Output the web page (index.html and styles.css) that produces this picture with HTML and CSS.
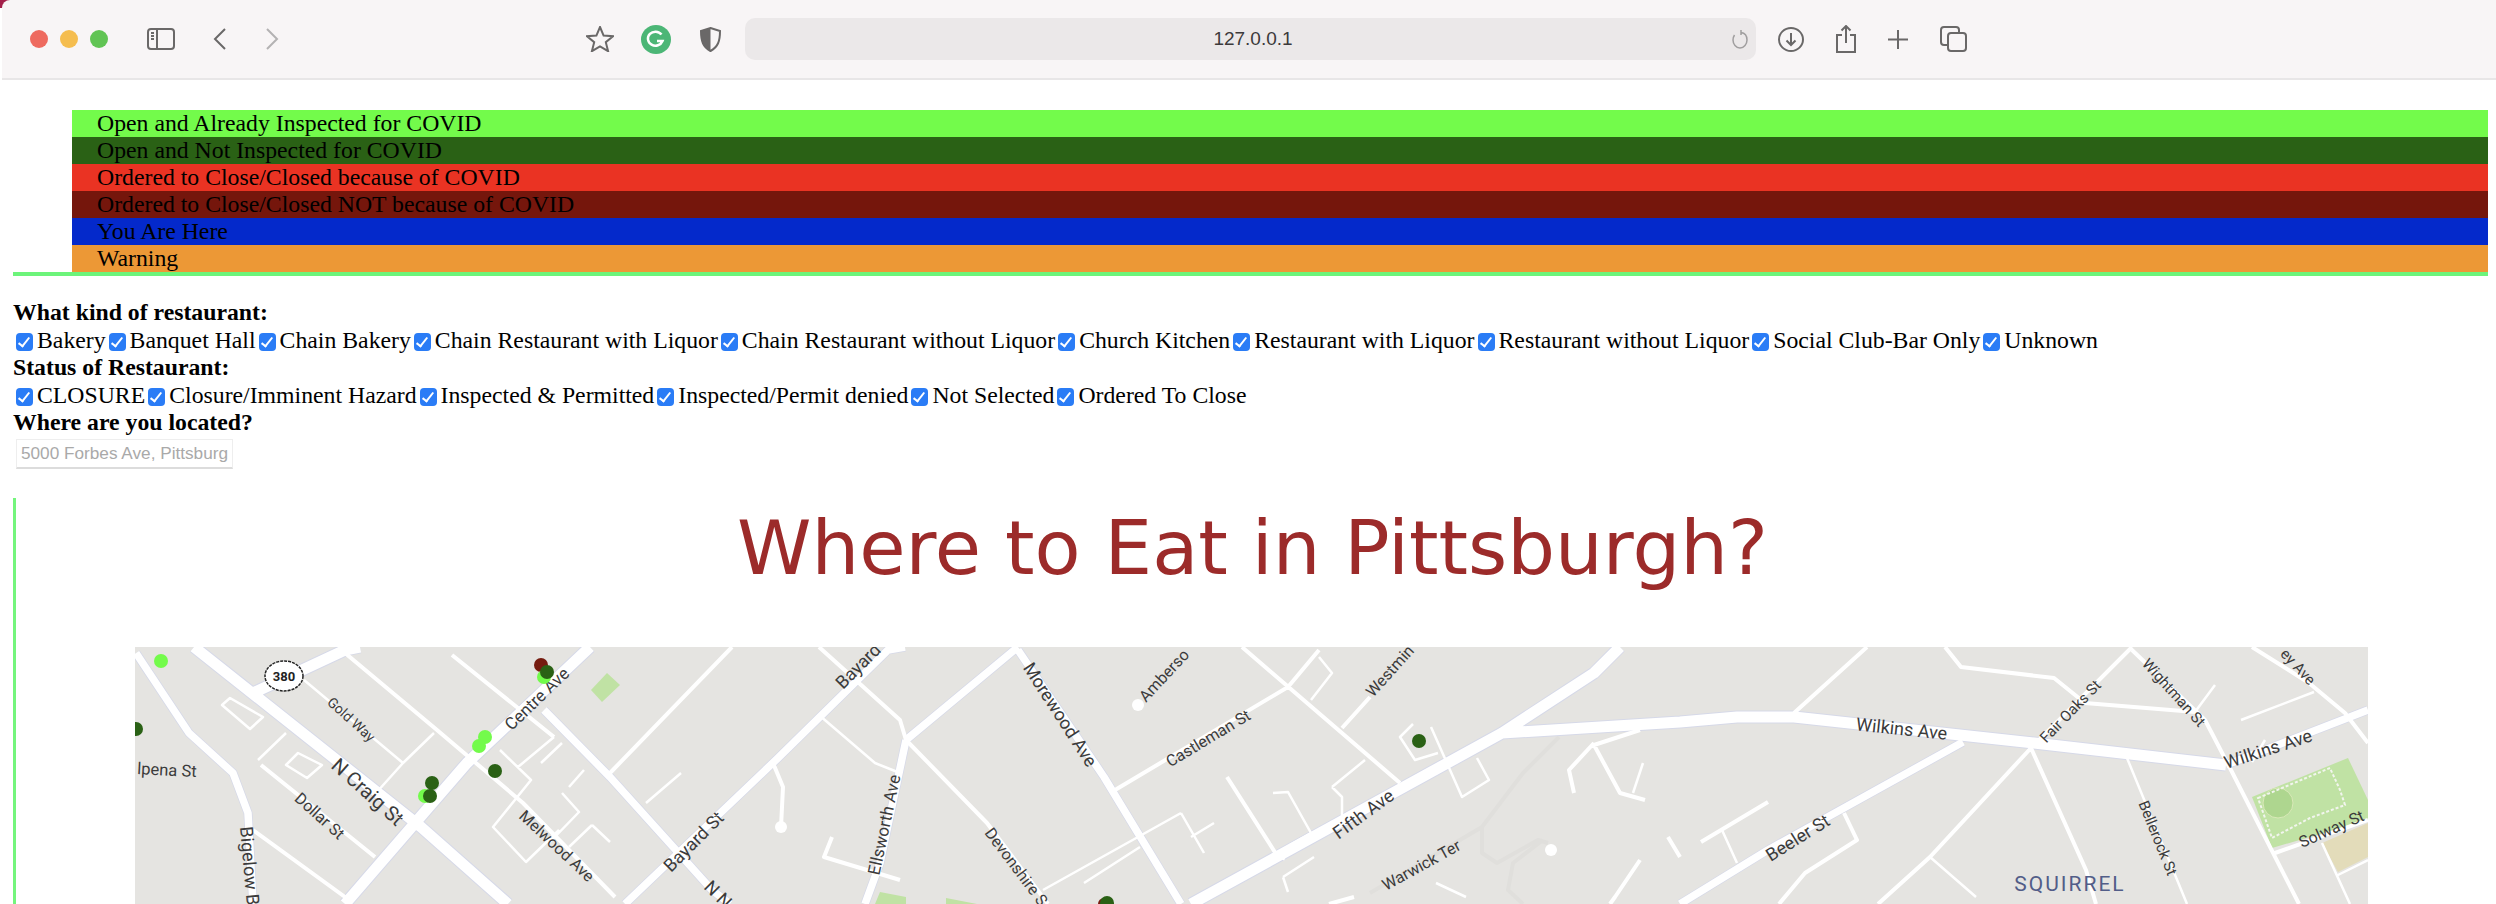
FILE: index.html
```html
<!DOCTYPE html>
<html>
<head>
    <title>Where to Eat in Pittsburgh?</title>
    <link rel="stylesheet" href="styles.css">
</head>
<body>
    <div class="browser">
        <div class="toolbar">
            <span class="light red"></span>
            <span class="light yellow"></span>
            <span class="light green"></span>
            <svg class="tb-icon tb-sidebar" width="28" height="22" viewBox="0 0 28 22"><rect x="1" y="1" width="26" height="20" rx="3"/><path d="M10 1v20M4 5h3M4 8h3M4 11h3"/></svg>
            <svg class="tb-icon tb-back" width="14" height="22" viewBox="0 0 14 22"><path d="M12 1 2 11l10 10"/></svg>
            <svg class="tb-icon tb-forward" width="14" height="22" viewBox="0 0 14 22"><path d="m2 1 10 10L2 21"/></svg>
            <svg class="tb-icon tb-star" width="28" height="26" viewBox="0 0 28 26"><path d="m14 1 3.6 8.6 9.4.7-7.200 5.900 2.300 9L14 20.300 5.900 25.200l2.300-9L1 10.300l9.400-.7z"/></svg>
            <svg class="tb-grammarly" width="30" height="29" viewBox="0 0 30 29"><ellipse cx="15" cy="14.500" rx="15" ry="14.500" fill="#4cb676"/><path d="M20.500 9.500a7.500 7 0 1 0 1 6.500H16" fill="none" stroke="#fff" stroke-width="2.500"/></svg>
            <svg class="tb-icon tb-shield" width="21" height="25" viewBox="0 0 21 25"><path d="M10.500 1 20 4c0 10-2 16-9.500 20C3 20 1 14 1 4z"/><path class="fill" d="M10.500 1 1 4c0 10 2 16 9.500 20z"/></svg>
            <div class="url-bar">
                <span></span>
                <span class="url-text">127.0.0.1</span>
                <svg class="tb-icon tb-reload" width="18" height="20" viewBox="0 0 18 20"><path d="M10 3.500C14 4 16 7 16 11c0 4-3 8-7 8s-7-4-7-8c0-2 .5-3.500 1.500-5M10 1v5"/></svg>
            </div>
            <svg class="tb-icon tb-download" width="26" height="25" viewBox="0 0 26 25"><ellipse cx="13" cy="12.500" rx="12" ry="11.500"/><path d="M13 6v12M8.500 13.500 13 18l4.500-4.500"/></svg>
            <svg class="tb-icon tb-share" width="22" height="28" viewBox="0 0 22 28"><path d="M7 10H2v17h18V10h-5M11 18V1M6.500 5.500 11 1l4.500 4.500"/></svg>
            <svg class="tb-icon tb-plus" width="22" height="21" viewBox="0 0 22 21"><path d="M11 1v19M1 10.500h20"/></svg>
            <svg class="tb-icon tb-tabs" width="27" height="26" viewBox="0 0 27 26"><rect x="8" y="7" width="18" height="18" rx="3"/><path d="M8 19H4a3 3 0 0 1-3-3V4a3 3 0 0 1 3-3h12a3 3 0 0 1 3 3v3"/></svg>
        </div>
    </div>

    <div class="legend">
        <ul class="legend-list">
            <li class="key-open-inspected">Open and Already Inspected for COVID</li>
            <li class="key-open">Open and Not Inspected for COVID</li>
            <li class="key-closed-covid">Ordered to Close/Closed because of COVID</li>
            <li class="key-closed">Ordered to Close/Closed NOT because of COVID</li>
            <li class="key-here">You Are Here</li>
            <li class="key-warning">Warning</li>
        </ul>
    </div>

    <form class="filters">
        <div class="filter-title">What kind of restaurant:</div>
        <div class="filter-row">
            <label><input type="checkbox" checked>Bakery</label><label><input type="checkbox" checked>Banquet Hall</label><label><input type="checkbox" checked>Chain Bakery</label><label><input type="checkbox" checked>Chain Restaurant with Liquor</label><label><input type="checkbox" checked>Chain Restaurant without Liquor</label><label><input type="checkbox" checked>Church Kitchen</label><label><input type="checkbox" checked>Restaurant with Liquor</label><label><input type="checkbox" checked>Restaurant without Liquor</label><label><input type="checkbox" checked>Social Club-Bar Only</label><label><input type="checkbox" checked>Unknown</label>
        </div>
        <div class="filter-title">Status of Restaurant:</div>
        <div class="filter-row">
            <label><input type="checkbox" checked>CLOSURE</label><label><input type="checkbox" checked>Closure/Imminent Hazard</label><label><input type="checkbox" checked>Inspected &amp; Permitted</label><label><input type="checkbox" checked>Inspected/Permit denied</label><label><input type="checkbox" checked>Not Selected</label><label><input type="checkbox" checked>Ordered To Close</label>
        </div>
        <div class="filter-title">Where are you located?</div>
        <input class="location" type="text" placeholder="5000 Forbes Ave, Pittsburgh">
    </form>

    <div class="content">
        <h1>Where to Eat in Pittsburgh?</h1>
        <svg class="map" width="2233" height="257" viewBox="135 647 2233 257">
            <defs>
                <path id="wide" d="M194 647 421 827 508 904M345 904 467 763 590 647M253 693 345 650 360 647M1191 904 1502 733 1594 673 1620 647M1502 733 1680 722 1737 717 1794 717 2034 743 2226 765"/>
                <path id="mid" d="M136 653 189 733 233 773 248 813 253 904M544 710 610 777 712 890 730 904M625 904 778 758 888 650 905 647M906 740 1018 647M906 740 880 863 865 904M1018 650 1104 777 1181 904M1680 904 1768 850 1963 742M2226 765 2368 710"/>
                <path id="thin" d="M345 653 437 730 523 803 615 897M452 655 554 737M610 773 732 647M261 765 375 857M253 830 345 897M819 647 900 720 906 740 987 823 1048 904M1115 790 1288 687 1319 650M1242 647 1400 783M1342 728 1370 697M1779 904 1805 873 1857 840 1844 813M1878 904 1930 857 2031 748 2132 647M2031 748 2086 870 2096 904M2132 650 2205 720 2231 770 2299 904M1945 647 1961 667 2054 678 2085 703 2195 712M2252 647 2309 683 2345 713 2368 743M1794 713 1867 647M1701 842 1768 802M1227 777 1278 857M2275 853 2368 820M832 837 824 857 900 880M773 763 783 787 781 827M1594 743 1569 770 1574 793M1640 730 1594 745 1620 793 1645 800M1640 860 1615 897 1610 904M1354 897 1329 904M1668 837 1680 857"/>
                <path id="fine" d="M222 705 230 698 263 717 250 729ZM258 760 286 733M286 765 298 753 322 765 307 778ZM304 680 403 763 434 733M376 793 403 763M500 750 531 780 493 827 526 862 559 830M562 743 541 763M554 737 518 767M584 770 569 787M562 793 579 812 549 843M592 825 610 842M592 825 569 847M681 773 646 803M819 715 875 763 900 773M1181 813 1204 853M1043 890 1181 813M1191 837 1214 823M1084 883 1140 847M1273 793 1288 792 1311 833M1332 787 1365 760M1332 787 1342 797 1342 817M1413 724 1400 737 1415 760 1438 753M1431 727 1462 797 1489 780 1477 758M1311 700 1332 673 1319 657M1311 833 1290 845 1283 860M1283 877 1288 892M1283 877 1314 857M1643 763 1633 793M1436 883 1466 897M2127 758 2187 904M2241 720 2314 692M1930 857 1976 897M1722 830 1737 863M2338 875 2368 860M2322 843 2350 904M2252 762 2265 740M2195 712 2215 685"/>
            </defs>
            <rect class="land" x="135" y="647" width="2233" height="257"/>
            <path class="terrain" d="M1559 737 1523 773 1482 827 1370 893M1482 827 1482 853 1497 863 1538 840 1548 843M1543 840 1513 863 1508 890 1523 904"/>
            <polygon class="park" points="607,673 620,685 602,702 591,690"/>
            <polygon class="park" points="875,904 880,892 906,897 906,904"/>
            <polygon class="park" points="946,898 977,904 946,904"/>
            <polygon class="park" points="2252,797 2348,758 2368,800 2368,820 2272,848"/>
            <polygon class="sand" points="2322,843 2368,823 2368,857 2338,872"/>
            <ellipse class="park-field" cx="2278" cy="803" rx="15" ry="15"/>
            <path class="park-path" d="M2258 798 2330 768 2340 790 2345 805 2310 818 2272 838Z"/>
            <use class="casing casing-wide" href="#wide"/>
            <use class="casing casing-mid" href="#mid"/>
            <use class="road road-wide" href="#wide"/>
            <use class="road road-mid" href="#mid"/>
            <use class="road road-thin" href="#thin"/>
            <use class="road road-fine" href="#fine"/>
            <circle class="cul" cx="781" cy="827" r="6"/>
            <circle class="cul" cx="1138" cy="705" r="6"/>
            <circle class="cul" cx="1551" cy="850" r="6"/>

            <text class="label" font-size="17" transform="translate(541 703) rotate(-44)">Centre Ave</text>
            <text class="label" font-size="20" transform="translate(363 797) rotate(42)">N Craig St</text>
            <text class="label" font-size="14" transform="translate(348 723) rotate(42)">Gold Way</text>
            <text class="label start" font-size="16.500" transform="translate(137 774) rotate(3)">lpena St</text>
            <text class="label" font-size="16" transform="translate(316 820) rotate(42)">Dollar St</text>
            <text class="label" font-size="16" transform="translate(553 850) rotate(43)">Melwood Ave</text>
            <text class="label start" font-size="18" transform="translate(240 827) rotate(85)">Bigelow B</text>
            <text class="label" font-size="18" transform="translate(698 846) rotate(-45)">Bayard St</text>
            <text class="label start" font-size="18" transform="translate(843 690) rotate(-45)">Bayard</text>
            <text class="label start" font-size="18" transform="translate(703 888) rotate(45)">N N</text>
            <text class="label" font-size="17" transform="translate(890 826) rotate(-78)">Ellsworth Ave</text>
            <text class="label start" font-size="16" transform="translate(1146 703) rotate(-47)">Amberso</text>
            <text class="label" font-size="18" transform="translate(1055 718) rotate(57)">Morewood Ave</text>
            <text class="label" font-size="16" transform="translate(1211 743) rotate(-31)">Castleman St</text>
            <text class="label start" font-size="16" transform="translate(1373 698) rotate(-48)">Westmin</text>
            <text class="label start" font-size="16" transform="translate(984 833) rotate(53)">Devonshire S</text>
            <text class="label" font-size="18" transform="translate(1367 819) rotate(-36)">Fifth Ave</text>
            <text class="label" font-size="16" transform="translate(1424 870) rotate(-29)">Warwick Ter</text>
            <text class="label" font-size="18" transform="translate(1901 735) rotate(6)">Wilkins Ave</text>
            <text class="label" font-size="18" transform="translate(2270 755) rotate(-18)">Wilkins Ave</text>
            <text class="label" font-size="15" transform="translate(2074 715) rotate(-46)">Fair Oaks St</text>
            <text class="label" font-size="15" transform="translate(2170 696) rotate(48)">Wightman St</text>
            <text class="label" font-size="18" transform="translate(1801 843) rotate(-32)">Beeler St</text>
            <text class="label" font-size="15" transform="translate(2153 840) rotate(68)">Bellerock St</text>
            <text class="label start" font-size="16" transform="translate(2302 848) rotate(-24)">Solway St</text>
            <text class="label end" font-size="15" transform="translate(2309 686) rotate(47)">ey Ave</text>
            <text class="hood" x="2070" y="891">SQUIRREL</text>
            <text class="hood" x="2070" y="920">HILL NORTH</text>

            <ellipse class="shield" cx="284" cy="676" rx="19" ry="15"/>
            <text class="shield-text" x="284" y="681">380</text>

            <circle class="dot dot-open-inspected" cx="161" cy="661" r="7"/>
            <circle class="dot dot-open" cx="136" cy="729" r="7"/>
            <circle class="dot dot-closed" cx="541" cy="665" r="7"/>
            <circle class="dot dot-open-inspected" cx="544" cy="677" r="7"/>
            <circle class="dot dot-open" cx="547" cy="672" r="7"/>
            <circle class="dot dot-open-inspected" cx="485" cy="737" r="7"/>
            <circle class="dot dot-open-inspected" cx="479" cy="746" r="7"/>
            <circle class="dot dot-open" cx="495" cy="771" r="7"/>
            <circle class="dot dot-open" cx="432" cy="783" r="7"/>
            <circle class="dot dot-open-inspected" cx="425" cy="796" r="7"/>
            <circle class="dot dot-open" cx="430" cy="796" r="7"/>
            <circle class="dot dot-open" cx="1419" cy="741" r="7"/>
            <circle class="dot dot-closed" cx="1104" cy="904" r="6"/>
            <circle class="dot dot-open" cx="1107" cy="903" r="7"/>
        </svg>
    </div>
</body>
</html>
```

FILE: styles.css
```css
body {
    margin: 0;
    height: 904px;
    overflow: hidden;
    background-color: #fff;
    color: #000;
    font-family: "Liberation Serif", serif;
    font-size: 23.750px;
    line-height: 27.5px;
}

/* browser window bar */
.browser {
    background: linear-gradient(#a3204a 0 8px, #fff 8px);
}

.toolbar {
    display: flex;
    align-items: center;
    height: 78px;
    margin-left: 2px;
    padding-left: 28px;
    background-color: #f8f5f6;
    border-bottom: 2px solid #e8e6e7;
    border-top-left-radius: 8px;
}

.light {
    width: 18px;
    height: 18px;
    margin-right: 12px;
    border-radius: 50%;
}

.red { background-color: #ee6a5f; }
.yellow { background-color: #f5bd4f; }
.green { background-color: #61c454; }

.tb-icon {
    flex: none;
    fill: none;
    stroke: #6a6868;
    stroke-width: 2;
}

.tb-icon .fill {
    fill: #6a6868;
    stroke: none;
}

.tb-sidebar { margin-left: 27px; }
.tb-back { margin-left: 38px; }
.tb-forward { margin-left: 38px; stroke: #b4b2b3; }
.tb-star { margin-left: 307px; }
.tb-grammarly { flex: none; margin-left: 27px; }
.tb-shield { margin-left: 29px; }
.tb-download { margin-left: 22px; }
.tb-share { margin-left: 31px; }
.tb-plus { margin-left: 30px; }
.tb-tabs { margin-left: 31px; }
.tb-reload { justify-self: end; margin-right: 7px; stroke: #a09e9f; stroke-width: 1.5; }

.url-bar {
    display: grid;
    grid-template-columns: 1fr auto 1fr;
    align-items: center;
    flex: none;
    width: 1011px;
    height: 42px;
    margin-left: 24px;
    padding-left: 5px;
    box-sizing: border-box;
    background-color: #ebe8e9;
    border-radius: 10px;
}

.url-text {
    font-family: "Liberation Sans", sans-serif;
    font-size: 19px;
    color: #3c3a3b;
}

/* colour key */
.legend {
    margin: 30px 8px 0 13px;
    border-bottom: 4px solid #6cf47a;
}

.legend-list {
    list-style: none;
    margin: 0;
    padding: 0 0 0 59px;
}

.legend-list li {
    height: 27px;
    padding-left: 25px;
    line-height: 27px;
}

.key-open-inspected { background-color: #73fb4b; }
.key-open { background-color: #2a6115; }
.key-closed-covid { background-color: #ea3323; }
.key-closed { background-color: #75160c; }
.key-here { background-color: #0429cb; }
.key-warning { background-color: #ec9836; }

/* filters */
.filters {
    margin: 23px 13px 0;
}

.filter-title {
    font-weight: bold;
}

.filter-row label {
    white-space: nowrap;
}

.filter-row input {
    position: relative;
    appearance: none;
    width: 17px;
    height: 18px;
    margin: 0 4px 0 3px;
    vertical-align: -3px;
    background-color: #2a7cf6;
    border-radius: 4px;
}

.filter-row input::after {
    content: "";
    position: absolute;
    left: 5px;
    top: 2px;
    width: 4px;
    height: 10px;
    border: solid #fff;
    border-width: 0 2px 2px 0;
    transform: rotate(38deg);
}

.location {
    display: block;
    box-sizing: border-box;
    width: 217px;
    height: 30px;
    margin: 2px 0 0 3px;
    padding: 0 4px;
    border: 1px solid #eeeeee;
    border-bottom: 2px solid #dcdcdc;
    font-family: "Liberation Sans", sans-serif;
    font-size: 17.200px;
}

.location::placeholder {
    color: #a9a9a9;
}

/* title and map */
.content {
    margin: 29.500px 7px 0 13px;
    border-left: 3px solid #74f57c;
}

h1 {
    margin: 0;
    height: 149px;
    padding-top: 14.500px;
    box-sizing: border-box;
    text-align: center;
    font-family: "DejaVu Sans", sans-serif;
    font-weight: normal;
    font-size: 75.300px;
    line-height: 70px;
    color: #9c2b2a;
}

.map {
    display: block;
    margin-left: 119px;
}

.land { fill: #e5e4e1; }
.park { fill: #c0e2a4; }
.sand { fill: #e3dcba; }
.park-field { fill: #aed68f; stroke: #d9e9b8; }
.park-path { fill: none; stroke: #f2f5ee; stroke-width: 2; stroke-dasharray: 3 2; }
.terrain { fill: none; stroke: #e0dfdc; stroke-width: 4; stroke-linejoin: round; }

.casing, .road {
    fill: none;
    stroke-linejoin: round;
}

.road { stroke: #fff; }
.casing { stroke: #d6d9e8; }
.casing-wide { stroke-width: 13; }
.casing-mid { stroke-width: 9; }
.road-wide { stroke-width: 11; }
.road-mid { stroke-width: 7.500; }
.road-thin { stroke-width: 4; }
.road-fine { stroke-width: 2.500; }
.cul { fill: #fff; }

.label {
    font-family: "Roboto", sans-serif;
    fill: #3b3b3b;
    text-anchor: middle;
}

.label.start { text-anchor: start; }
.label.end { text-anchor: end; }

.hood {
    font-family: "Roboto", sans-serif;
    font-size: 21px;
    letter-spacing: 2px;
    fill: #525d88;
    text-anchor: middle;
}

.shield { fill: #fff; stroke: #222; stroke-width: 1.500; stroke-dasharray: 3 1; }

.shield-text {
    font-family: "Roboto", sans-serif;
    font-size: 13px;
    font-weight: bold;
    fill: #222;
    text-anchor: middle;
}

.dot-open-inspected { fill: #73fb4b; }
.dot-open { fill: #2a6115; }
.dot-closed { fill: #751b0f; }
```
